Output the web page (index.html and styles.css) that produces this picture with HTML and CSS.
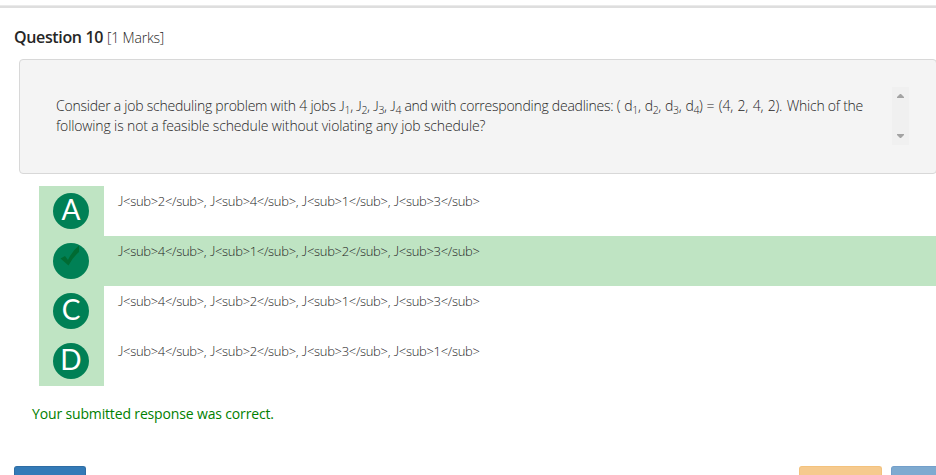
FILE: index.html
```html
<!DOCTYPE html>
<html lang="en">
<head>
<meta charset="utf-8">
<title>Question 10</title>
<link rel="stylesheet" href="styles.css">
</head>
<body>
<div class="topbar"></div>
<main>
<h1 class="title"><span class="number">Question 10</span><span class="marks">[1 Marks]</span></h1>
<section class="question">
<div class="statement">
<div class="line-one">Consider a job scheduling problem with 4 jobs <span class="jobs"><i>J</i><sub>1</sub>, <i>J</i><sub>2</sub>, <i>J</i><sub>3</sub>, <i>J</i><sub>4</sub></span> and with corresponding deadlines: <span class="deadlines">( d<sub>1</sub>, d<sub>2</sub>, d<sub>3</sub>, d<sub>4</sub>) =</span><span class="values"> (4, 2, 4, 2). </span>Which of the</div>
<div class="line-two">following is not a feasible schedule without violating any job schedule?</div>
</div>
<div class="scrollbar">
<svg width="7" height="4" viewBox="0 0 7 4"><path d="M0 4V3L3 0H4L7 3V4Z"/></svg>
<svg width="7" height="4" viewBox="0 0 7 4"><path d="M0 0V1L3 4H4L7 1V0Z"/></svg>
</div>
</section>
<section class="options">
<div class="option"><div class="key"><span class="circle">A</span></div><div class="answer"><i>J</i>&lt;sub&gt;2&lt;/sub&gt;, <i>J</i>&lt;sub&gt;4&lt;/sub&gt;, <i>J</i>&lt;sub&gt;1&lt;/sub&gt;, <i>J</i>&lt;sub&gt;3&lt;/sub&gt;</div></div>
<div class="option selected"><div class="key"><span class="circle"><svg class="check" width="36" height="36" viewBox="0 0 36 36"><path d="M7.5 15.5L12 13L15 17Q19 8 26 2.5V9Q19 15 15.5 22.5Z"/></svg></span></div><div class="answer"><i>J</i>&lt;sub&gt;4&lt;/sub&gt;, <i>J</i>&lt;sub&gt;1&lt;/sub&gt;, <i>J</i>&lt;sub&gt;2&lt;/sub&gt;, <i>J</i>&lt;sub&gt;3&lt;/sub&gt;</div></div>
<div class="option"><div class="key"><span class="circle">C</span></div><div class="answer"><i>J</i>&lt;sub&gt;4&lt;/sub&gt;, <i>J</i>&lt;sub&gt;2&lt;/sub&gt;, <i>J</i>&lt;sub&gt;1&lt;/sub&gt;, <i>J</i>&lt;sub&gt;3&lt;/sub&gt;</div></div>
<div class="option"><div class="key"><span class="circle">D</span></div><div class="answer"><i>J</i>&lt;sub&gt;4&lt;/sub&gt;, <i>J</i>&lt;sub&gt;2&lt;/sub&gt;, <i>J</i>&lt;sub&gt;3&lt;/sub&gt;, <i>J</i>&lt;sub&gt;1&lt;/sub&gt;</div></div>
</section>
<p class="result">Your submitted response was correct.</p>
<div class="actions"><span class="button primary"></span><span class="button warning"></span><span class="button next"></span></div>
</main>
</body>
</html>
```
FILE: styles.css
```css
* { box-sizing: border-box; }
body { margin: 0; height: 475px; overflow: hidden; background: #fff; color: #262626; font: 300 14px/20px "Open Sans", "Noto Sans", sans-serif; }
.topbar { height: 8px; background: linear-gradient(#fff 0 5px, #eaeaea 5px 6px, #dedede 6px 8px); }
.title { display: flex; align-items: baseline; gap: 4px; height: 20px; margin: 19px 0 0 14px; font-size: 14px; font-weight: 300; white-space: nowrap; }
.number { font: 600 16px/20px "Open Sans", sans-serif; letter-spacing: -0.35px; }
.marks { letter-spacing: -0.2px; }
.question { display: flex; justify-content: space-between; height: 115px; width: 918px; margin: 12px 0 0 19px; padding: 27px 27px 28px 36px; border: 1px solid #d8d8d8; border-radius: 4px; background: #f4f4f4; }
.statement { padding-top: 9px; white-space: nowrap; }
.line-one { letter-spacing: -0.24px; }
.line-two { letter-spacing: -0.13px; }
.jobs { letter-spacing: -0.38px; }
.deadlines { letter-spacing: -0.33px; word-spacing: 0.7px; }
.values { word-spacing: 1.2px; }
i { font-family: Lato, sans-serif; font-style: normal; font-weight: 300; }
sub { font-size: 75%; line-height: 0; position: relative; bottom: -0.25em; vertical-align: baseline; }
.scrollbar { display: flex; flex-direction: column; align-items: center; justify-content: space-between; width: 17px; height: 58px; padding: 7px 0; background: #f0f0f0; fill: #a3a3a3; }
.options { margin: 12px 0 0 39px; }
.option { display: flex; height: 50px; }
.selected { background: #bfe4c3; }
.key { width: 65px; padding: 7px 0 0 14px; background: #bfe4c3; }
.circle { display: block; width: 36px; height: 36px; border-radius: 50%; background: #008055; color: #fff; font: 400 28px/33px Lato, sans-serif; text-align: center; }
.check { display: block; fill: #006b33; }
.answer { padding: 5px 0 0 14px; white-space: nowrap; font-size: 13px; letter-spacing: -0.31px; word-spacing: 0.5px; }
.result { margin: 18px 0 0 32px; color: #008000; font-weight: 400; letter-spacing: -0.15px; }
.actions { display: flex; margin: 42px 0 0 14px; overflow: hidden; }
.button { flex: none; height: 9px; border: 1px solid; border-bottom: 0; border-radius: 3px 3px 0 0; }
.primary { width: 72px; background: #337ab7; border-color: #2e6da4; }
.warning { width: 83px; margin-left: 713px; background: #f6ca8e; border-color: #f3c27d; }
.next { width: 72px; margin-left: 9px; background: #7eaad0; border-color: #739fca; }
```
